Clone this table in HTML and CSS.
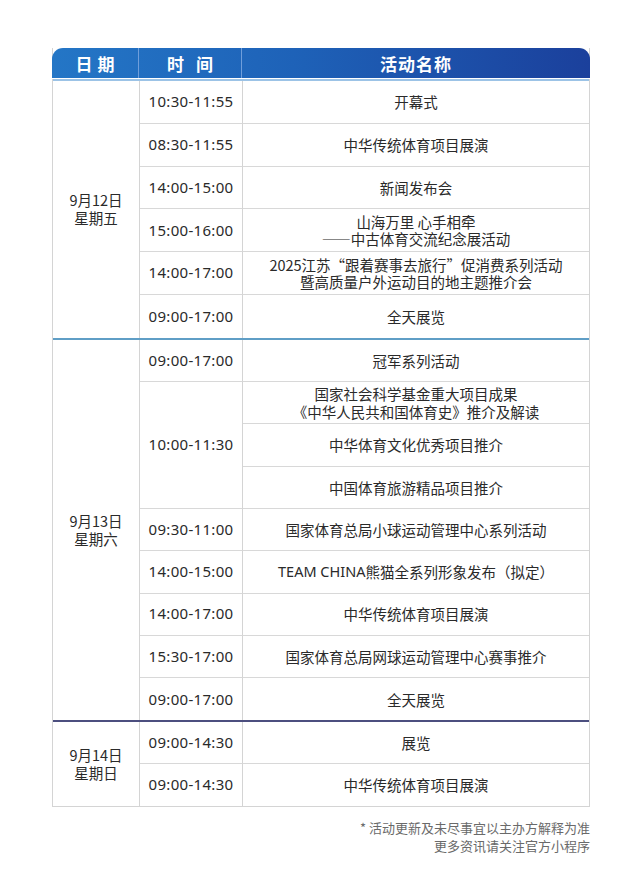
FILE: index.html
```html
<!DOCTYPE html>
<html lang="zh-CN">
<head>
<meta charset="utf-8">
<title>活动日程</title>
<link rel="stylesheet" href="styles.css">
</head>
<body>
<div class="page">
  <div class="table">
    <div class="head">
      <div class="hc c-date">日期</div>
      <div class="hc c-time">时间</div>
      <div class="hc c-act">活动名称</div>
    </div>

    <div class="day d1">
      <div class="cell date r6">9月12日<br>星期五</div>
      <div class="cell time">10:30-11:55</div><div class="cell act">开幕式</div>
      <div class="cell time">08:30-11:55</div><div class="cell act">中华传统体育项目展演</div>
      <div class="cell time">14:00-15:00</div><div class="cell act">新闻发布会</div>
      <div class="cell time">15:00-16:00</div><div class="cell act">山海万里 心手相牵<br>——中古体育交流纪念展活动</div>
      <div class="cell time">14:00-17:00</div><div class="cell act">2025江苏“跟着赛事去旅行”促消费系列活动<br>暨高质量户外运动目的地主题推介会</div>
      <div class="cell time last">09:00-17:00</div><div class="cell act last">全天展览</div>
    </div>

    <div class="day d2">
      <div class="cell date r9">9月13日<br>星期六</div>
      <div class="cell time">09:00-17:00</div><div class="cell act">冠军系列活动</div>
      <div class="cell time r3">10:00-11:30</div><div class="cell act">国家社会科学基金重大项目成果<br>《中华人民共和国体育史》推介及解读</div>
      <div class="cell act">中华体育文化优秀项目推介</div>
      <div class="cell act">中国体育旅游精品项目推介</div>
      <div class="cell time">09:30-11:00</div><div class="cell act">国家体育总局小球运动管理中心系列活动</div>
      <div class="cell time">14:00-15:00</div><div class="cell act"><span class="lat">TEAM CHINA</span>熊猫全系列形象发布（拟定）</div>
      <div class="cell time">14:00-17:00</div><div class="cell act">中华传统体育项目展演</div>
      <div class="cell time">15:30-17:00</div><div class="cell act">国家体育总局网球运动管理中心赛事推介</div>
      <div class="cell time last">09:00-17:00</div><div class="cell act last">全天展览</div>
    </div>

    <div class="day d3">
      <div class="cell date r2">9月14日<br>星期日</div>
      <div class="cell time">09:00-14:30</div><div class="cell act">展览</div>
      <div class="cell time last">09:00-14:30</div><div class="cell act last">中华传统体育项目展演</div>
    </div>
  </div>

  <div class="note">
    <p>* 活动更新及未尽事宜以主办方解释为准</p>
    <p>更多资讯请关注官方小程序</p>
  </div>
</div>
</body>
</html>
```

FILE: styles.css
```css
* { box-sizing: border-box; }
body {
  margin: 0;
  background: #ffffff;
  font-family: "Noto Sans CJK SC", "Noto Sans", sans-serif;
  color: #2a2a2a;
}
.page {
  width: 640px;
  padding: 48px 50px 0 52px;
}
.table {
  width: 538px;
  border-left: 1px solid #d4d4d4;
  border-right: 1px solid #d4d4d4;
  border-bottom: 1px solid #d4d4d4;
}
.head {
  display: grid;
  grid-template-columns: 87px 103px 1fr;
  height: 31px;
  margin: 0 -1px;
  background: linear-gradient(90deg, #2476c6 0%, #1e62b8 45%, #1b409c 100%);
  border-radius: 11px 11px 0 0;
  border-bottom: 1px solid #ffffff;
}
.hc {
  display: flex;
  align-items: center;
  justify-content: center;
  color: #ffffff;
  font-weight: 700;
  font-size: 17px;
  border-right: 1px solid #6f9edb;
}
.hc.c-act { border-right: none; }
.c-date { letter-spacing: 5px; padding-left: 5px; }
.c-time { letter-spacing: 12px; padding-left: 12px; }
.c-act { letter-spacing: 1px; }

.day {
  display: grid;
  grid-template-columns: 87px 103px 1fr;
}
.d1 { grid-auto-rows: 42.8px; border-top: 2px solid #9cc3e6; }
.d2 { grid-auto-rows: 42.3px; border-top: 2px solid #5f9ec6; }
.d3 { grid-auto-rows: 41.7px; border-top: 2px solid #4c4f7f; }

.cell {
  display: flex;
  align-items: center;
  justify-content: center;
  text-align: center;
  font-size: 14.5px;
  line-height: 17.5px;
  border-bottom: 1px solid #d8d8d8;
}
.cell.last { border-bottom: none; }
.date {
  grid-column: 1;
  border-right: 1px solid #d4d4d4;
  border-bottom: none;
  line-height: 18px;
}
.time {
  grid-column: 2;
  border-right: 1px solid #d4d4d4;
  font-family: "Noto Sans", "Noto Sans CJK SC", sans-serif;
  font-size: 15px;
  letter-spacing: 0.3px;
}
.act { grid-column: 3; }
.lat { font-family: "Noto Sans", sans-serif; }
.r6 { grid-row: span 6; }
.r9 { grid-row: span 9; }
.r2 { grid-row: span 2; }
.r3 { grid-row: span 3; }

.note {
  width: 538px;
  margin-top: 12px;
  text-align: right;
  color: #6a6a6a;
  font-size: 13px;
  line-height: 18px;
}
.note p { margin: 0; }
```
